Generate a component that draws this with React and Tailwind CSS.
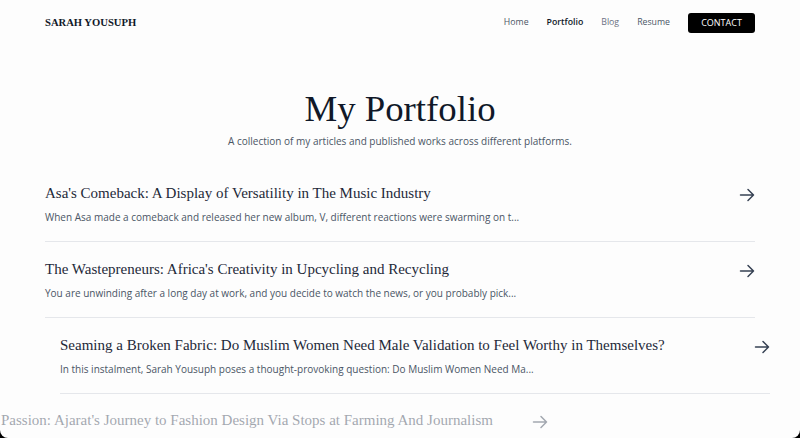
const serif = { fontFamily: '"Liberation Serif", "DejaVu Serif", serif' };

const articles = [
  {
    title: "Asa's Comeback: A Display of Versatility in The Music Industry",
    excerpt: 'When Asa made a comeback and released her new album, V, different reactions were swarming on t...',
    shift: '',
  },
  {
    title: "The Wastepreneurs: Africa's Creativity in Upcycling and Recycling",
    excerpt: 'You are unwinding after a long day at work, and you decide to watch the news, or you probably pick...',
    shift: '',
  },
  {
    title: 'Seaming a Broken Fabric: Do Muslim Women Need Male Validation to Feel Worthy in Themselves?',
    excerpt: 'In this instalment, Sarah Yousuph poses a thought-provoking question: Do Muslim Women Need Ma...',
    shift: 'translate-x-[15px]',
  },
];

function Arrow({ className = '' }) {
  return (
    <svg viewBox="0 0 16 16" className={`w-[16px] h-[16px] ${className}`} fill="none" stroke="currentColor" strokeWidth={1.5} strokeLinecap="round" strokeLinejoin="round">
      <path d="M1.5 8h13M9 2.5 14.5 8 9 13.5" />
    </svg>
  );
}

function ArticleRow({ article }) {
  return (
    <div className={`border-b border-gray-200 pt-[16px] pb-[16px] ${article.shift}`}>
      <div className="flex items-center justify-between">
        <h2 className="text-[15px] leading-[22px] text-gray-800" style={serif}>
          {article.title}
        </h2>
        <Arrow className="text-gray-700 mt-[3px]" />
      </div>
      <p className="mt-[5px] text-[10px] leading-[16px] text-gray-600">{article.excerpt}</p>
    </div>
  );
}

export default function App() {
  return (
    <div className="bg-black h-[438px] overflow-hidden" style={{ fontFamily: '"Open Sans", sans-serif' }}>
      <div className="bg-[#fdfdfd] h-full rounded-b-[8px] overflow-hidden">
        {/* Nav */}
        <nav className="flex items-center justify-between px-[45px] mt-[13px] h-[20px]">
          <span className="text-[10.6px] font-bold text-gray-900" style={serif}>
            SARAH YOUSUPH
          </span>
          <div className="flex items-center gap-[18px] text-[8.75px]">
            <a className="text-gray-600">Home</a>
            <a className="font-semibold text-gray-900">Portfolio</a>
            <a className="text-gray-500">Blog</a>
            <a className="text-gray-600">Resume</a>
            <a className="bg-black text-white rounded-[3px] w-[67px] h-[20px] flex items-center justify-center text-[9px]">
              CONTACT
            </a>
          </div>
        </nav>

        {/* Heading */}
        <header className="text-center mt-[54px]">
          <h1 className="text-[36.8px] leading-[44px] text-gray-900" style={serif}>
            My Portfolio
          </h1>
          <p className="mt-[3px] text-[10px] leading-[15px] text-gray-600">
            A collection of my articles and published works across different platforms.
          </p>
        </header>

        {/* Articles */}
        <div className="px-[45px] mt-[17px]">
          {articles.map((a) => (
            <ArticleRow key={a.title} article={a} />
          ))}
        </div>

        {/* item fading in */}
        <div className="w-[548px] pl-[1px] pt-[15px] flex items-center justify-between opacity-45">
          <h2 className="text-[15px] leading-[22px] text-gray-700 whitespace-nowrap" style={serif}>
            Passion: Ajarat's Journey to Fashion Design Via Stops at Farming And Journalism
          </h2>
          <Arrow className="text-gray-700 mt-[3px]" />
        </div>
      </div>
    </div>
  );
}
